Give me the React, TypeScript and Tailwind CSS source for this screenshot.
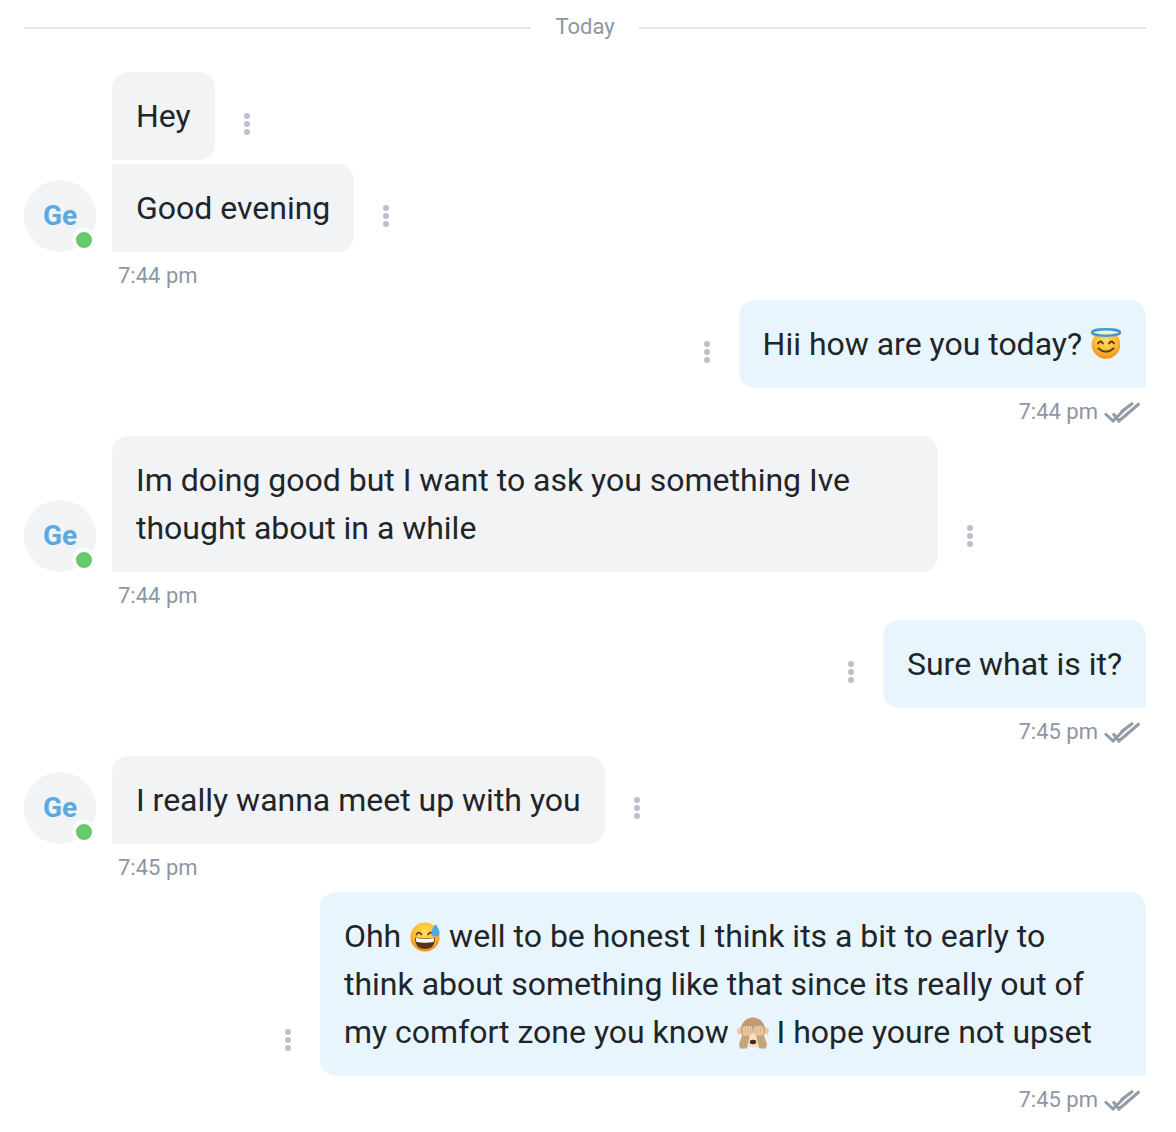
import type { ReactNode } from "react";

const HaloEmoji = () => (
  <svg viewBox="0 0 32 32" className="inline-block w-8 h-8 align-[-5px] overflow-visible">
    <defs>
      <radialGradient id="faceA" cx="50%" cy="35%" r="65%">
        <stop offset="0%" stopColor="#fde15a" />
        <stop offset="65%" stopColor="#fbb92f" />
        <stop offset="100%" stopColor="#ef8a1c" />
      </radialGradient>
    </defs>
    <circle cx="16" cy="16.500" r="14.300" fill="url(#faceA)" />
    <ellipse cx="16" cy="4.500" rx="14" ry="3.200" fill="#fbf3b8" stroke="#4595dc" strokeWidth="2.400" />
    <path d="M8 15.500q2.500-4 5 0M19 15.500q2.500-4 5 0" fill="none" stroke="#5a3a1a" strokeWidth="1.800" strokeLinecap="round" />
    <path d="M8.500 20.500q7.500 6.500 15 0" fill="none" stroke="#5a3a1a" strokeWidth="2" strokeLinecap="round" />
  </svg>
);

const SweatEmoji = () => (
  <svg viewBox="0 0 32 32" className="inline-block w-8 h-8 align-[-6px] overflow-visible">
    <defs>
      <radialGradient id="faceB" cx="50%" cy="35%" r="65%">
        <stop offset="0%" stopColor="#fde15a" />
        <stop offset="65%" stopColor="#fbb92f" />
        <stop offset="100%" stopColor="#ef8a1c" />
      </radialGradient>
    </defs>
    <circle cx="16" cy="16" r="14.600" fill="url(#faceB)" />
    <path d="M7.500 13.500q2.500-4 5 0M19 13.500q2.500-4 5 0" fill="none" stroke="#5a3a1a" strokeWidth="1.600" strokeLinecap="round" />
    <path d="M6 16.500q10 2 20 0q0 11.500-10 11.500t-10-11.500z" fill="#5b3318" />
    <path d="M6.800 17q9.200 1.800 18.400 0l-.6 4q-8.600 1.600-17.200 0z" fill="#fff" />
    <path d="M26.500 3q4 5.500 4 8.500a4 4 0 0 1-8 0q0-3 4-8.500z" fill="#4aa8e8" />
  </svg>
);

const MonkeyEmoji = () => (
  <svg viewBox="0 0 32 32" className="inline-block w-8 h-8 align-[-6px] overflow-visible">
    <circle cx="3.500" cy="14" r="3.500" fill="#ecc9a2" />
    <circle cx="28.500" cy="14" r="3.500" fill="#ecc9a2" />
    <ellipse cx="16" cy="12.500" rx="12" ry="12" fill="#c09a70" />
    <ellipse cx="16" cy="23" rx="8" ry="7.500" fill="#f5e0c2" />
    <ellipse cx="16" cy="25" rx="3.200" ry="2.200" fill="#4b2416" />
    <path d="M7 13l-5 14 1 4.500h7l3-14z" fill="#c9a47a" />
    <path d="M25 13l5 14-1 4.500h-7l-3-14z" fill="#c9a47a" />
    <rect x="5.500" y="9" width="10" height="9.500" rx="3" fill="#ecc9a2" />
    <rect x="16.500" y="9" width="10" height="9.500" rx="3" fill="#ecc9a2" />
    <path d="M8.500 10v7M11 9.500v8M13.500 10v7M18.500 10v7M21 9.500v8M23.500 10v7" stroke="#c9a47a" strokeWidth=".6" />
  </svg>
);

const Dots = () => (
  <div className="flex flex-col gap-[2px] w-[6px] shrink-0 mb-[25px]">
    <span className="w-[6px] h-[6px] rounded-full bg-[#bcbfc9]" />
    <span className="w-[6px] h-[6px] rounded-full bg-[#bcbfc9]" />
    <span className="w-[6px] h-[6px] rounded-full bg-[#bcbfc9]" />
  </div>
);

const Avatar = () => (
  <div className="relative w-[72px] h-[72px] shrink-0 rounded-full bg-[#f1f3f5] flex items-center justify-center">
    <span className="text-[28px] leading-none font-bold text-[#5aaae0] tracking-normal">Ge</span>
    <span className="absolute right-0 bottom-0 w-6 h-6 rounded-full bg-[#67c96e] border-4 border-white" />
  </div>
);

const Checks = () => (
  <svg viewBox="0 0 36 24" className="w-9 h-6 ml-[6px]" fill="none" stroke="#929ba8" strokeWidth="3">
    <path d="M1 13.500l8 7.500L21 9" />
    <path d="M9 13.500l6 7.500L35.500 3.500" />
    <path d="M17 12L29 3" />
  </svg>
);

const Incoming = ({ bubbles, time }: { bubbles: ReactNode[]; time: string }) => (
  <div>
    <div className="flex items-end">
      <Avatar />
      <div className="flex flex-col gap-1 ml-4">
        {bubbles.map((text, i) => (
          <div key={i} className="flex items-end">
            <div
              className={`bg-[#f1f3f5] w-fit px-6 py-5 rounded-2xl ${i > 0 ? "rounded-l-none" : "rounded-bl-none"}`}
            >
              {text}
            </div>
            <div className="ml-[29px]">
              <Dots />
            </div>
          </div>
        ))}
      </div>
    </div>
    <div className="h-12 flex items-center pl-[94px] text-[22px] tracking-normal text-[#8c96a4]">{time}</div>
  </div>
);

const Outgoing = ({ children, time }: { children: ReactNode; time: string }) => (
  <div>
    <div className="flex items-end justify-end">
      <div className="mr-[29px]">
        <Dots />
      </div>
      <div className="bg-[#e8f5fd] w-fit px-6 py-5 rounded-2xl rounded-br-none">{children}</div>
    </div>
    <div className="h-12 flex items-center justify-end pr-[6px] text-[22px] tracking-normal text-[#8c96a4]">
      {time}
      <Checks />
    </div>
  </div>
);

export default function App() {
  return (
    <div className="w-[1176px] h-[1132px] bg-white pl-6 pr-[30px] text-[32px] leading-[48px] tracking-[-0.01px] text-[#212529] font-['Roboto',sans-serif] overflow-hidden">
      <div className="h-14 flex items-center gap-6">
        <div className="flex-1 h-[2px] bg-[#e3e6ea]" />
        <span className="text-[22px] leading-8 tracking-normal text-[#8c96a4] mb-[2px]">Today</span>
        <div className="flex-1 h-[2px] bg-[#e3e6ea]" />
      </div>
      <div className="mt-4">
        <Incoming bubbles={["Hey", "Good evening"]} time="7:44 pm" />
        <Outgoing time="7:44 pm">
          Hii how are you today? <HaloEmoji />
        </Outgoing>
        <Incoming
          bubbles={[
            <div className="w-[778px]">Im doing good but I want to ask you something Ive thought about in a while</div>,
          ]}
          time="7:44 pm"
        />
        <Outgoing time="7:45 pm">Sure what is it?</Outgoing>
        <Incoming bubbles={["I really wanna meet up with you"]} time="7:45 pm" />
        <Outgoing time="7:45 pm">
          <div className="w-[778px]">
            Ohh <SweatEmoji /> well to be honest I think its a bit to early to
            <br />
            think about something like that since its really out of
            <br />
            my comfort zone you know <MonkeyEmoji /> I hope youre not upset
          </div>
        </Outgoing>
      </div>
    </div>
  );
}
